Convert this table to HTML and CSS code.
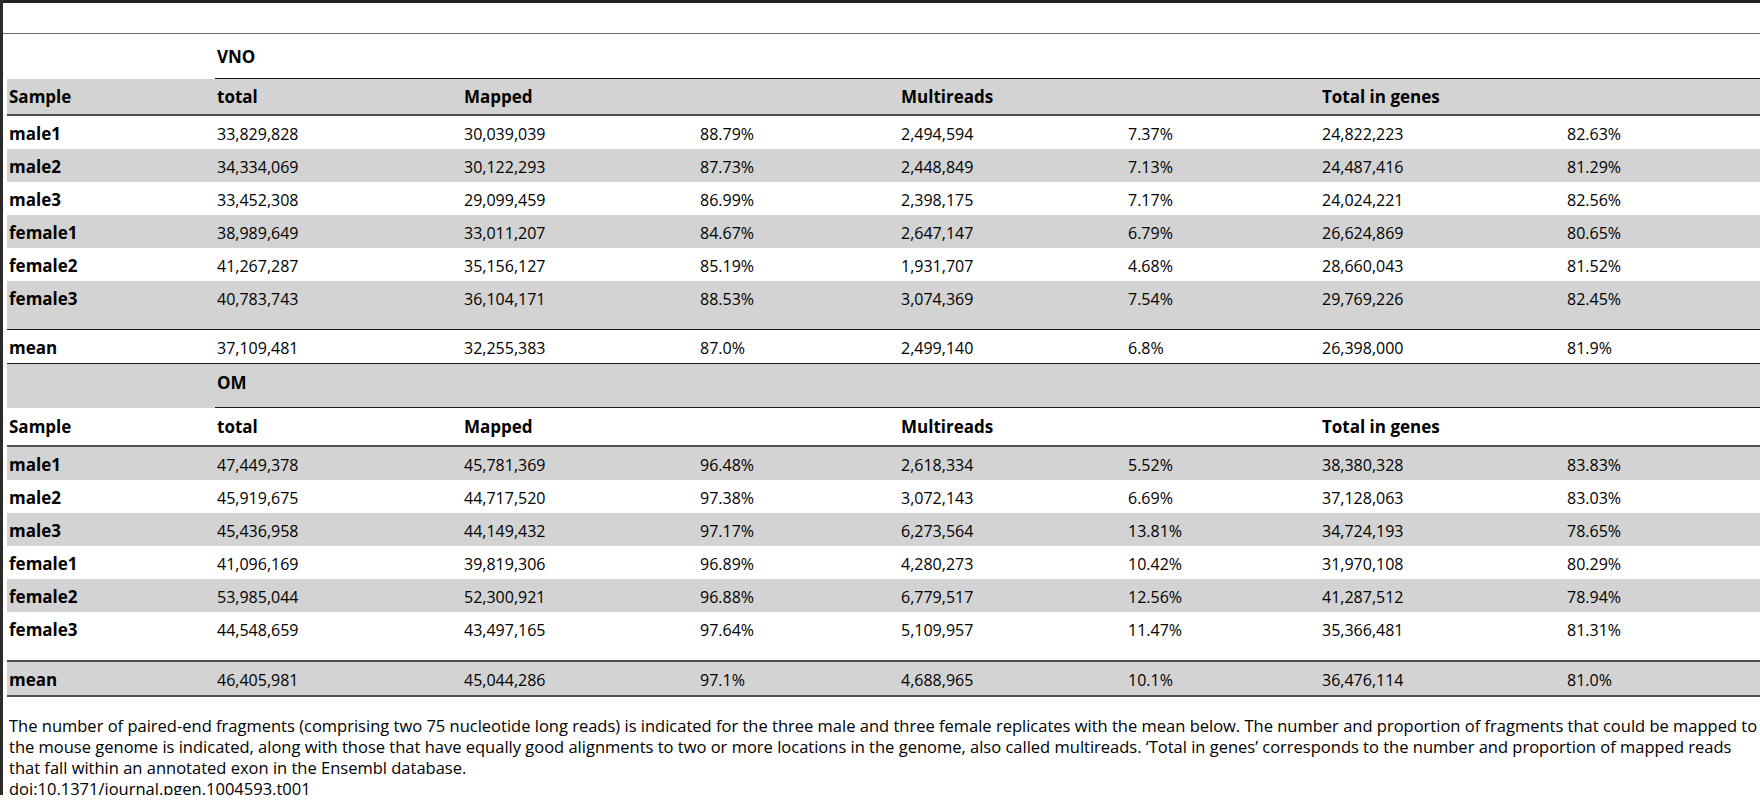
FILE: index.html
```html
<!DOCTYPE html>
<html>
<head>
<meta charset="utf-8">
<link rel="stylesheet" href="styles.css">
</head>
<body>
<div class="frame">
  <div class="title-space"></div>
  <table class="data">
    <colgroup>
      <col class="c0"><col class="c1"><col class="c2"><col class="c3"><col class="c4"><col class="c5"><col class="c6"><col class="c7">
    </colgroup>
    <tbody>
      <tr class="group-row white"><td></td><td colspan="7" class="group-label">VNO</td></tr>
      <tr class="head-row gray"><th>Sample</th><th>total</th><th colspan="2">Mapped</th><th colspan="2">Multireads</th><th colspan="2">Total in genes</th></tr>
      <tr class="white"><th>male1</th><td>33,829,828</td><td>30,039,039</td><td>88.79%</td><td>2,494,594</td><td>7.37%</td><td>24,822,223</td><td>82.63%</td></tr>
      <tr class="gray"><th>male2</th><td>34,334,069</td><td>30,122,293</td><td>87.73%</td><td>2,448,849</td><td>7.13%</td><td>24,487,416</td><td>81.29%</td></tr>
      <tr class="white"><th>male3</th><td>33,452,308</td><td>29,099,459</td><td>86.99%</td><td>2,398,175</td><td>7.17%</td><td>24,024,221</td><td>82.56%</td></tr>
      <tr class="gray"><th>female1</th><td>38,989,649</td><td>33,011,207</td><td>84.67%</td><td>2,647,147</td><td>6.79%</td><td>26,624,869</td><td>80.65%</td></tr>
      <tr class="white"><th>female2</th><td>41,267,287</td><td>35,156,127</td><td>85.19%</td><td>1,931,707</td><td>4.68%</td><td>28,660,043</td><td>81.52%</td></tr>
      <tr class="gray last"><th>female3</th><td>40,783,743</td><td>36,104,171</td><td>88.53%</td><td>3,074,369</td><td>7.54%</td><td>29,769,226</td><td>82.45%</td></tr>
      <tr class="white mean"><th>mean</th><td>37,109,481</td><td>32,255,383</td><td>87.0%</td><td>2,499,140</td><td>6.8%</td><td>26,398,000</td><td>81.9%</td></tr>
      <tr class="group-row om gray"><td></td><td colspan="7" class="group-label">OM</td></tr>
      <tr class="head-row second white"><th>Sample</th><th>total</th><th colspan="2">Mapped</th><th colspan="2">Multireads</th><th colspan="2">Total in genes</th></tr>
      <tr class="gray"><th>male1</th><td>47,449,378</td><td>45,781,369</td><td>96.48%</td><td>2,618,334</td><td>5.52%</td><td>38,380,328</td><td>83.83%</td></tr>
      <tr class="white"><th>male2</th><td>45,919,675</td><td>44,717,520</td><td>97.38%</td><td>3,072,143</td><td>6.69%</td><td>37,128,063</td><td>83.03%</td></tr>
      <tr class="gray"><th>male3</th><td>45,436,958</td><td>44,149,432</td><td>97.17%</td><td>6,273,564</td><td>13.81%</td><td>34,724,193</td><td>78.65%</td></tr>
      <tr class="white"><th>female1</th><td>41,096,169</td><td>39,819,306</td><td>96.89%</td><td>4,280,273</td><td>10.42%</td><td>31,970,108</td><td>80.29%</td></tr>
      <tr class="gray"><th>female2</th><td>53,985,044</td><td>52,300,921</td><td>96.88%</td><td>6,779,517</td><td>12.56%</td><td>41,287,512</td><td>78.94%</td></tr>
      <tr class="white last"><th>female3</th><td>44,548,659</td><td>43,497,165</td><td>97.64%</td><td>5,109,957</td><td>11.47%</td><td>35,366,481</td><td>81.31%</td></tr>
      <tr class="gray final"><th>mean</th><td>46,405,981</td><td>45,044,286</td><td>97.1%</td><td>4,688,965</td><td>10.1%</td><td>36,476,114</td><td>81.0%</td></tr>
    </tbody>
  </table>
  <div class="caption">
    <p>The number of paired-end fragments (comprising two 75 nucleotide long reads) is indicated for the three male and three female replicates with the mean below. The number and proportion of fragments that could be mapped to the mouse genome is indicated, along with those that have equally good alignments to two or more locations in the genome, also called multireads. ‘Total in genes’ corresponds to the number and proportion of mapped reads that fall within an annotated exon in the Ensembl database.</p>
    <p>doi:10.1371/journal.pgen.1004593.t001</p>
  </div>
</div>
</body>
</html>
```
FILE: styles.css
```css
html {
  overflow: hidden;
  scrollbar-width: none;
}
html::-webkit-scrollbar,
body::-webkit-scrollbar {
  display: none;
  width: 0;
  height: 0;
}
html, body {
  margin: 0;
  padding: 0;
  background: #ffffff;
}
body {
  font-family: "Open Sans", "Noto Sans", sans-serif;
  color: #000;
  font-size: 16px;
  width: 1760px;
  overflow: hidden;
}
.frame {
  border-left: 3px solid #2b2b2b;
  padding-left: 4px;
  height: 795px;
  box-sizing: border-box;
}
.title-space {
  height: 30px;
  border-top: 3px solid #222;
  border-bottom: 1px solid #6a6a6a;
  margin-left: -4px;
}
.data {
  width: 1753px;
  border-collapse: separate;
  border-spacing: 0;
  table-layout: fixed;
}
.c0 { width: 208px; }
.c1 { width: 247px; }
.c2 { width: 236px; }
.c3 { width: 201px; }
.c4 { width: 227px; }
.c5 { width: 194px; }
.c6 { width: 245px; }
.c7 { width: 195px; }
.data th, .data td {
  text-align: left;
  vertical-align: top;
  padding: 6px 2px 3px 2px;
  line-height: 24px;
  white-space: nowrap;
}
.data th {
  font-weight: 700;
  font-size: 17px;
}
.data td {
  font-weight: 400;
  font-size: 16px;
}
.gray { background: #d3d3d3; }
.white { background: #ffffff; }
.group-row td {
  padding: 11px 2px 9px 2px;
}
.group-row .group-label {
  font-weight: 700;
  font-size: 17px;
  border-bottom: 1px solid #1a1a1a;
}
.group-row.om td {
  padding: 7px 2px 12px 2px;
}
.head-row th {
  padding: 6px 2px 5px 2px;
  border-bottom: 2px solid #505050;
}
.head-row.second th {
  padding: 7px 2px 6px 2px;
}
.last th, .last td {
  padding-bottom: 18px;
}
.mean th, .mean td {
  border-top: 1px solid #1a1a1a;
  border-bottom: 1px solid #1a1a1a;
}
.final th, .final td {
  border-top: 2px solid #505050;
  border-bottom: 2px solid #505050;
}
.caption {
  padding: 18px 0 0 2px;
  font-size: 16.5px;
  line-height: 21px;
  width: 1751px;
}
.caption p { margin: 0; }
```
